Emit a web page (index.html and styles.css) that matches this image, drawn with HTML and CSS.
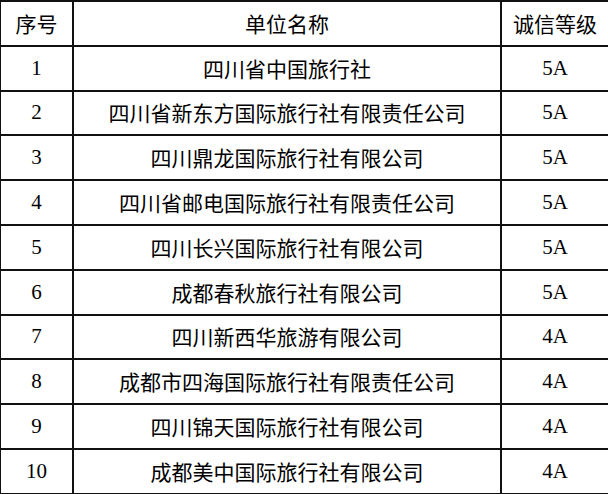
FILE: index.html
```html
<!DOCTYPE html>
<html lang="zh">
<head>
<meta charset="utf-8">
<link rel="stylesheet" href="styles.css">
</head>
<body>
<table class="grid">
  <colgroup>
    <col class="c-no">
    <col class="c-name">
    <col class="c-grade">
  </colgroup>
  <thead>
    <tr><th>序号</th><th>单位名称</th><th>诚信等级</th></tr>
  </thead>
  <tbody>
    <tr><td class="num">1</td><td>四川省中国旅行社</td><td class="num">5A</td></tr>
    <tr><td class="num">2</td><td>四川省新东方国际旅行社有限责任公司</td><td class="num">5A</td></tr>
    <tr><td class="num">3</td><td>四川鼎龙国际旅行社有限公司</td><td class="num">5A</td></tr>
    <tr><td class="num">4</td><td>四川省邮电国际旅行社有限责任公司</td><td class="num">5A</td></tr>
    <tr><td class="num">5</td><td>四川长兴国际旅行社有限公司</td><td class="num">5A</td></tr>
    <tr><td class="num">6</td><td>成都春秋旅行社有限公司</td><td class="num">5A</td></tr>
    <tr><td class="num">7</td><td>四川新西华旅游有限公司</td><td class="num">4A</td></tr>
    <tr><td class="num">8</td><td>成都市四海国际旅行社有限责任公司</td><td class="num">4A</td></tr>
    <tr><td class="num">9</td><td>四川锦天国际旅行社有限公司</td><td class="num">4A</td></tr>
    <tr><td class="num">10</td><td>成都美中国际旅行社有限公司</td><td class="num">4A</td></tr>
  </tbody>
</table>
</body>
</html>
```

FILE: styles.css
```css
html, body {
  margin: 0;
  padding: 0;
  background: #fff;
  overflow: hidden;
}
.grid {
  border-collapse: collapse;
  table-layout: fixed;
  width: 609px;
  margin: 0 0 0 -1px;
  font-family: "Noto Sans CJK SC", "Noto Sans", sans-serif;
  font-size: 21px;
  color: #000;
}
.c-no { width: 73px; }
.c-name { width: 428px; }
.c-grade { width: 108px; }
.grid th, .grid td {
  border: 2px solid #111;
  height: 42.8px;
  padding: 0;
  text-align: center;
  vertical-align: middle;
  font-weight: normal;
  line-height: 1;
  white-space: nowrap;
}
.grid td.num {
  font-family: "Liberation Serif", "Times New Roman", serif;
  font-size: 21px;
}
```
